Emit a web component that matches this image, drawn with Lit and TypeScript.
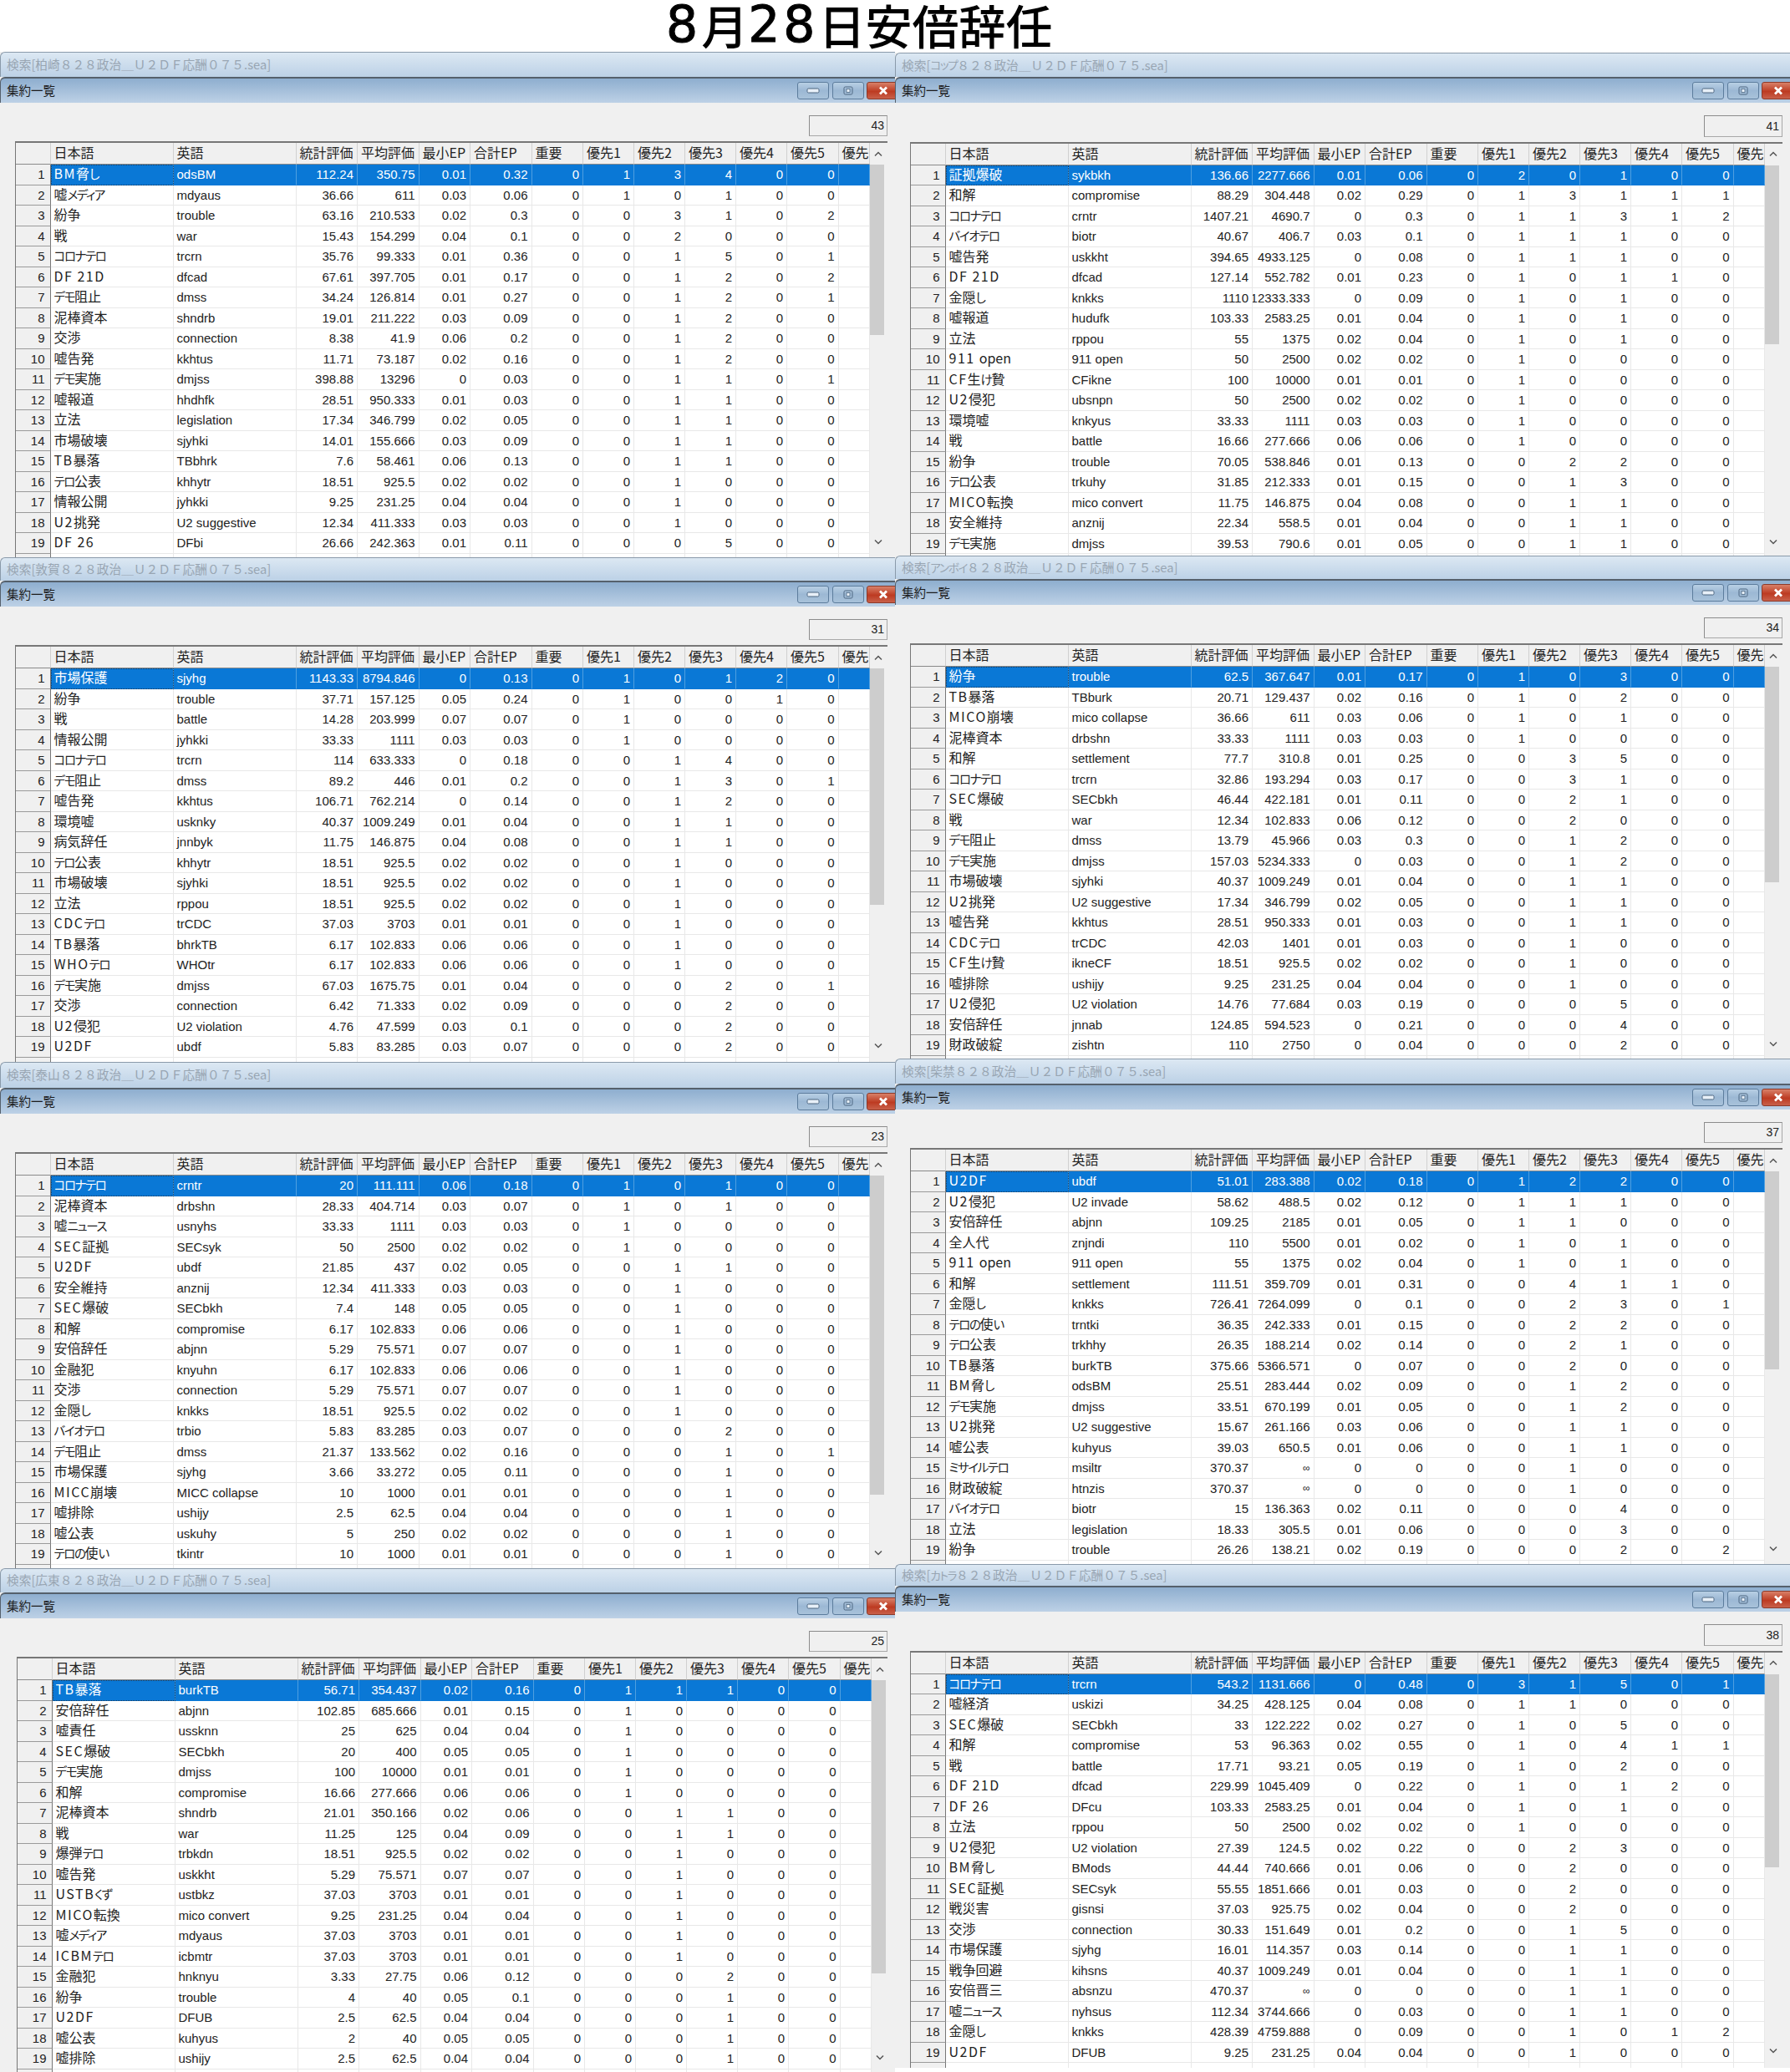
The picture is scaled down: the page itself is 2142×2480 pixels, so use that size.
import { LitElement, html, css } from 'lit';
import { customElement, property } from 'lit/decorators.js';

const HEADERS = ['', '日本語', '英語', '統計評価', '平均評価', '最小EP', '合計EP', '重要', '優先1', '優先2', '優先3', '優先4', '優先5', '優先'];

interface WindowData {
  name: string;
  count: number;
  height: number; // distance to next window
  bar: number; // outer bar height
  inset?: number; // left padding of the body
  rows: string;
}

const LEFT: WindowData[] = [
  {
    name: '柏崎', count: 43, height: 605, bar: 29.5, rows: `
BM脅し|odsBM|112.24|350.75|0.01|0.32|0|1|3|4|0|0
嘘メディア|mdyaus|36.66|611|0.03|0.06|0|1|0|1|0|0
紛争|trouble|63.16|210.533|0.02|0.3|0|0|3|1|0|2
戦|war|15.43|154.299|0.04|0.1|0|0|2|0|0|0
コロナテロ|trcrn|35.76|99.333|0.01|0.36|0|0|1|5|0|1
DF 21D|dfcad|67.61|397.705|0.01|0.17|0|0|1|2|0|2
デモ阻止|dmss|34.24|126.814|0.01|0.27|0|0|1|2|0|1
泥棒資本|shndrb|19.01|211.222|0.03|0.09|0|0|1|2|0|0
交渉|connection|8.38|41.9|0.06|0.2|0|0|1|2|0|0
嘘告発|kkhtus|11.71|73.187|0.02|0.16|0|0|1|2|0|0
デモ実施|dmjss|398.88|13296|0|0.03|0|0|1|1|0|1
嘘報道|hhdhfk|28.51|950.333|0.01|0.03|0|0|1|1|0|0
立法|legislation|17.34|346.799|0.02|0.05|0|0|1|1|0|0
市場破壊|sjyhki|14.01|155.666|0.03|0.09|0|0|1|1|0|0
TB暴落|TBbhrk|7.6|58.461|0.06|0.13|0|0|1|1|0|0
テロ公表|khhytr|18.51|925.5|0.02|0.02|0|0|1|0|0|0
情報公開|jyhkki|9.25|231.25|0.04|0.04|0|0|1|0|0|0
U2挑発|U2 suggestive|12.34|411.333|0.03|0.03|0|0|1|0|0|0
DF 26|DFbi|26.66|242.363|0.01|0.11|0|0|0|5|0|0`,
  },
  {
    name: '敦賀', count: 31, height: 604, bar: 27.5, rows: `
市場保護|sjyhg|1143.33|8794.846|0|0.13|0|1|0|1|2|0
紛争|trouble|37.71|157.125|0.05|0.24|0|1|0|0|1|0
戦|battle|14.28|203.999|0.07|0.07|0|1|0|0|0|0
情報公開|jyhkki|33.33|1111|0.03|0.03|0|1|0|0|0|0
コロナテロ|trcrn|114|633.333|0|0.18|0|0|1|4|0|0
デモ阻止|dmss|89.2|446|0.01|0.2|0|0|1|3|0|1
嘘告発|kkhtus|106.71|762.214|0|0.14|0|0|1|2|0|0
環境嘘|usknky|40.37|1009.249|0.01|0.04|0|0|1|1|0|0
病気辞任|jnnbyk|11.75|146.875|0.04|0.08|0|0|1|1|0|0
テロ公表|khhytr|18.51|925.5|0.02|0.02|0|0|1|0|0|0
市場破壊|sjyhki|18.51|925.5|0.02|0.02|0|0|1|0|0|0
立法|rppou|18.51|925.5|0.02|0.02|0|0|1|0|0|0
CDCテロ|trCDC|37.03|3703|0.01|0.01|0|0|1|0|0|0
TB暴落|bhrkTB|6.17|102.833|0.06|0.06|0|0|1|0|0|0
WHOテロ|WHOtr|6.17|102.833|0.06|0.06|0|0|1|0|0|0
デモ実施|dmjss|67.03|1675.75|0.01|0.04|0|0|0|2|0|1
交渉|connection|6.42|71.333|0.02|0.09|0|0|0|2|0|0
U2侵犯|U2 violation|4.76|47.599|0.03|0.1|0|0|0|2|0|0
U2DF|ubdf|5.83|83.285|0.03|0.07|0|0|0|2|0|0`,
  },
  {
    name: '泰山', count: 23, height: 606, bar: 30.5, rows: `
コロナテロ|crntr|20|111.111|0.06|0.18|0|1|0|1|0|0
泥棒資本|drbshn|28.33|404.714|0.03|0.07|0|1|0|1|0|0
嘘ニュース|usnyhs|33.33|1111|0.03|0.03|0|1|0|0|0|0
SEC証拠|SECsyk|50|2500|0.02|0.02|0|1|0|0|0|0
U2DF|ubdf|21.85|437|0.02|0.05|0|0|1|1|0|0
安全維持|anznij|12.34|411.333|0.03|0.03|0|0|1|0|0|0
SEC爆破|SECbkh|7.4|148|0.05|0.05|0|0|1|0|0|0
和解|compromise|6.17|102.833|0.06|0.06|0|0|1|0|0|0
安倍辞任|abjnn|5.29|75.571|0.07|0.07|0|0|1|0|0|0
金融犯|knyuhn|6.17|102.833|0.06|0.06|0|0|1|0|0|0
交渉|connection|5.29|75.571|0.07|0.07|0|0|1|0|0|0
金隠し|knkks|18.51|925.5|0.02|0.02|0|0|1|0|0|0
バイオテロ|trbio|5.83|83.285|0.03|0.07|0|0|0|2|0|0
デモ阻止|dmss|21.37|133.562|0.02|0.16|0|0|0|1|0|1
市場保護|sjyhg|3.66|33.272|0.05|0.11|0|0|0|1|0|0
MICC崩壊|MICC collapse|10|1000|0.01|0.01|0|0|0|1|0|0
嘘排除|ushijy|2.5|62.5|0.04|0.04|0|0|0|1|0|0
嘘公表|uskuhy|5|250|0.02|0.02|0|0|0|1|0|0
テロの使い|tkintr|10|1000|0.01|0.01|0|0|0|1|0|0`,
  },
  {
    name: '広東', count: 25, height: 603, bar: 28.5, inset: 20, rows: `
TB暴落|burkTB|56.71|354.437|0.02|0.16|0|1|1|1|0|0
安倍辞任|abjnn|102.85|685.666|0.01|0.15|0|1|0|0|0|0
嘘責任|ussknn|25|625|0.04|0.04|0|1|0|0|0|0
SEC爆破|SECbkh|20|400|0.05|0.05|0|1|0|0|0|0
デモ実施|dmjss|100|10000|0.01|0.01|0|1|0|0|0|0
和解|compromise|16.66|277.666|0.06|0.06|0|1|0|0|0|0
泥棒資本|shndrb|21.01|350.166|0.02|0.06|0|0|1|1|0|0
戦|war|11.25|125|0.04|0.09|0|0|1|1|0|0
爆弾テロ|trbkdn|18.51|925.5|0.02|0.02|0|0|1|0|0|0
嘘告発|uskkht|5.29|75.571|0.07|0.07|0|0|1|0|0|0
USTBくず|ustbkz|37.03|3703|0.01|0.01|0|0|1|0|0|0
MICO転換|mico convert|9.25|231.25|0.04|0.04|0|0|1|0|0|0
嘘メディア|mdyaus|37.03|3703|0.01|0.01|0|0|1|0|0|0
ICBMテロ|icbmtr|37.03|3703|0.01|0.01|0|0|1|0|0|0
金融犯|hnknyu|3.33|27.75|0.06|0.12|0|0|0|2|0|0
紛争|trouble|4|40|0.05|0.1|0|0|0|1|0|0
U2DF|DFUB|2.5|62.5|0.04|0.04|0|0|0|1|0|0
嘘公表|kuhyus|2|40|0.05|0.05|0|0|0|1|0|0
嘘排除|ushijy|2.5|62.5|0.04|0.04|0|0|0|1|0|0`,
  },
];

const RIGHT: WindowData[] = [
  {
    name: 'コップ', count: 41, height: 602, bar: 29, rows: `
証拠爆破|sykbkh|136.66|2277.666|0.01|0.06|0|2|0|1|0|0
和解|compromise|88.29|304.448|0.02|0.29|0|1|3|1|1|1
コロナテロ|crntr|1407.21|4690.7|0|0.3|0|1|1|3|1|2
バイオテロ|biotr|40.67|406.7|0.03|0.1|0|1|1|1|0|0
嘘告発|uskkht|394.65|4933.125|0|0.08|0|1|1|1|0|0
DF 21D|dfcad|127.14|552.782|0.01|0.23|0|1|0|1|1|0
金隠し|knkks|1110|12333.333|0|0.09|0|1|0|1|0|0
嘘報道|hudufk|103.33|2583.25|0.01|0.04|0|1|0|1|0|0
立法|rppou|55|1375|0.02|0.04|0|1|0|1|0|0
911 open|911 open|50|2500|0.02|0.02|0|1|0|0|0|0
CF生け贄|CFikne|100|10000|0.01|0.01|0|1|0|0|0|0
U2侵犯|ubsnpn|50|2500|0.02|0.02|0|1|0|0|0|0
環境嘘|knkyus|33.33|1111|0.03|0.03|0|1|0|0|0|0
戦|battle|16.66|277.666|0.06|0.06|0|1|0|0|0|0
紛争|trouble|70.05|538.846|0.01|0.13|0|0|2|2|0|0
テロ公表|trkuhy|31.85|212.333|0.01|0.15|0|0|1|3|0|0
MICO転換|mico convert|11.75|146.875|0.04|0.08|0|0|1|1|0|0
安全維持|anznij|22.34|558.5|0.01|0.04|0|0|1|1|0|0
デモ実施|dmjss|39.53|790.6|0.01|0.05|0|0|1|1|0|0`,
  },
  {
    name: 'アンボイ', count: 34, height: 602, bar: 27.5, rows: `
紛争|trouble|62.5|367.647|0.01|0.17|0|1|0|3|0|0
TB暴落|TBburk|20.71|129.437|0.02|0.16|0|1|0|2|0|0
MICO崩壊|mico collapse|36.66|611|0.03|0.06|0|1|0|1|0|0
泥棒資本|drbshn|33.33|1111|0.03|0.03|0|1|0|0|0|0
和解|settlement|77.7|310.8|0.01|0.25|0|0|3|5|0|0
コロナテロ|trcrn|32.86|193.294|0.03|0.17|0|0|3|1|0|0
SEC爆破|SECbkh|46.44|422.181|0.01|0.11|0|0|2|1|0|0
戦|war|12.34|102.833|0.06|0.12|0|0|2|0|0|0
デモ阻止|dmss|13.79|45.966|0.03|0.3|0|0|1|2|0|0
デモ実施|dmjss|157.03|5234.333|0|0.03|0|0|1|2|0|0
市場破壊|sjyhki|40.37|1009.249|0.01|0.04|0|0|1|1|0|0
U2挑発|U2 suggestive|17.34|346.799|0.02|0.05|0|0|1|1|0|0
嘘告発|kkhtus|28.51|950.333|0.01|0.03|0|0|1|1|0|0
CDCテロ|trCDC|42.03|1401|0.01|0.03|0|0|1|0|0|0
CF生け贄|ikneCF|18.51|925.5|0.02|0.02|0|0|1|0|0|0
嘘排除|ushijy|9.25|231.25|0.04|0.04|0|0|1|0|0|0
U2侵犯|U2 violation|14.76|77.684|0.03|0.19|0|0|0|5|0|0
安倍辞任|jnnab|124.85|594.523|0|0.21|0|0|0|4|0|0
財政破綻|zishtn|110|2750|0|0.04|0|0|0|2|0|0`,
  },
  {
    name: '柴禁', count: 37, height: 605, bar: 29.5, rows: `
U2DF|ubdf|51.01|283.388|0.02|0.18|0|1|2|2|0|0
U2侵犯|U2 invade|58.62|488.5|0.02|0.12|0|1|1|1|0|0
安倍辞任|abjnn|109.25|2185|0.01|0.05|0|1|1|0|0|0
全人代|znjndi|110|5500|0.01|0.02|0|1|0|1|0|0
911 open|911 open|55|1375|0.02|0.04|0|1|0|1|0|0
和解|settlement|111.51|359.709|0.01|0.31|0|0|4|1|1|0
金隠し|knkks|726.41|7264.099|0|0.1|0|0|2|3|0|1
テロの使い|trntki|36.35|242.333|0.01|0.15|0|0|2|2|0|0
テロ公表|trkhhy|26.35|188.214|0.02|0.14|0|0|2|1|0|0
TB暴落|burkTB|375.66|5366.571|0|0.07|0|0|2|0|0|0
BM脅し|odsBM|25.51|283.444|0.02|0.09|0|0|1|2|0|0
デモ実施|dmjss|33.51|670.199|0.01|0.05|0|0|1|2|0|0
U2挑発|U2 suggestive|15.67|261.166|0.03|0.06|0|0|1|1|0|0
嘘公表|kuhyus|39.03|650.5|0.01|0.06|0|0|1|1|0|0
ミサイルテロ|msiltr|370.37|∞|0|0|0|0|1|0|0|0
財政破綻|htnzis|370.37|∞|0|0|0|0|1|0|0|0
バイオテロ|biotr|15|136.363|0.02|0.11|0|0|0|4|0|0
立法|legislation|18.33|305.5|0.01|0.06|0|0|0|3|0|0
紛争|trouble|26.26|138.21|0.02|0.19|0|0|0|2|0|2`,
  },
  {
    name: 'カトラ', count: 38, height: 603, bar: 26, rows: `
コロナテロ|trcrn|543.2|1131.666|0|0.48|0|3|1|5|0|1
嘘経済|uskizi|34.25|428.125|0.04|0.08|0|1|1|0|0|0
SEC爆破|SECbkh|33|122.222|0.02|0.27|0|1|0|5|0|0
和解|compromise|53|96.363|0.02|0.55|0|1|0|4|1|1
戦|battle|17.71|93.21|0.05|0.19|0|1|0|2|0|0
DF 21D|dfcad|229.99|1045.409|0|0.22|0|1|0|1|2|0
DF 26|DFcu|103.33|2583.25|0.01|0.04|0|1|0|1|0|0
立法|rppou|50|2500|0.02|0.02|0|1|0|0|0|0
U2侵犯|U2 violation|27.39|124.5|0.02|0.22|0|0|2|3|0|0
BM脅し|BMods|44.44|740.666|0.01|0.06|0|0|2|0|0|0
SEC証拠|SECsyk|55.55|1851.666|0.01|0.03|0|0|2|0|0|0
戦災害|gisnsi|37.03|925.75|0.02|0.04|0|0|2|0|0|0
交渉|connection|30.33|151.649|0.01|0.2|0|0|1|5|0|0
市場保護|sjyhg|16.01|114.357|0.03|0.14|0|0|1|1|0|0
戦争回避|kihsns|40.37|1009.249|0.01|0.04|0|0|1|1|0|0
安倍晋三|absnzu|470.37|∞|0|0|0|0|1|1|0|0
嘘ニュース|nyhsus|112.34|3744.666|0|0.03|0|0|1|1|0|0
金隠し|knkks|428.39|4759.888|0|0.09|0|0|1|0|1|2
U2DF|DFUB|9.25|231.25|0.04|0.04|0|0|1|0|0|0`,
  },
];

// capitals and digits run wider than the kanji font gives them, kana narrower
const jpLabel = (text: string) =>
  text.split(/([A-Z0-9 ]+|[\u3040-\u30ff]+)/).map((part) => {
    if (/^[A-Z0-9 ]+$/.test(part)) return html`<span class="latin">${part}</span>`;
    if (/^[\u3040-\u30ff]+$/.test(part)) return html`<span class="kana">${part}</span>`;
    return part;
  });

@customElement('summary-window')
export class SummaryWindow extends LitElement {
  @property({ type: Object }) data!: WindowData;

  static styles = css`
    :host {
      display: block;
    }
    .window {
      overflow: hidden;
      background: #f0f0f0;
      color: #222;
      font-family: "Liberation Sans", "Noto Sans CJK JP", sans-serif;
      font-size: 15px;
      line-height: 1;
    }
    .outer-bar {
      box-sizing: border-box;
      display: flex;
      align-items: center;
      padding-left: 7px;
      border-top: 1px solid #8a9aaa;
      border-left: 1px solid #8a9aaa;
      border-top-left-radius: 6px;
      background: linear-gradient(#dce8f3, #bcd1e6);
      color: #98a5b2;
      font-family: "Noto Sans CJK JP", sans-serif;
      font-size: 14.7px;
      white-space: pre;
    }
    .outer-bar .kana {
      font-size: 13.5px;
      letter-spacing: -1.3px;
    }
    .title {
      box-sizing: border-box;
      height: 31px;
      display: flex;
      align-items: center;
      padding-left: 7px;
      border-top: 2px solid #55606c;
      border-left: 1px solid #55606c;
      border-top-left-radius: 6px;
      background: linear-gradient(#8eaecf, #bdd1e6);
      font-family: "Noto Sans CJK JP", sans-serif;
      font-size: 14.5px;
      color: #1c1c1c;
    }
    .buttons {
      margin-left: auto;
      display: flex;
      gap: 3.5px;
      margin-right: -6px;
    }
    .btn {
      box-sizing: border-box;
      width: 38px;
      height: 21px;
      display: flex;
      align-items: center;
      justify-content: center;
      border: 1px solid #5c7c9c;
      border-radius: 3px;
      background: linear-gradient(#b8cfe4, #9cb8d4 50%, #a8c2da);
    }
    .btn.close {
      width: 40px;
      border-color: #8c3a2a;
      background: linear-gradient(#d88068, #bd3b22 55%, #c8604a);
    }
    .body {
      box-sizing: border-box;
      padding-top: 15px;
      padding-right: 9px;
    }
    .count {
      box-sizing: border-box;
      width: 94px;
      height: 25.5px;
      margin-left: auto;
      margin-bottom: 6px;
      padding-right: 3px;
      display: flex;
      align-items: center;
      justify-content: flex-end;
      border: 1px solid #a8a8a8;
      border-top-color: #8c8c8c;
      border-left-color: #8c8c8c;
      font-size: 14px;
    }
    .table {
      display: flex;
      border-top: 2px solid #777;
      border-left: 1px solid #777;
    }
    .grid {
      width: 1021.5px;
      flex: none;
      background: #fff;
    }
    .row {
      display: grid;
      grid-template-columns: 41.5px 147px 147px 73.5px 73.5px 61.5px 73.5px 61.5px 61px 61px 61px 61px 61.5px 37px;
      height: 24.5px;
    }
    .row.head {
      height: 26px;
      background: #f0f0f0;
      font-family: "Noto Sans CJK JP", sans-serif;
      font-size: 16px;
    }
    .head .cell {
      box-sizing: border-box;
      display: flex;
      align-items: center;
      padding-left: 4px;
      padding-bottom: 3px;
      border-right: 1px solid #d0d0d0;
      border-bottom: 1px solid #8a8a8a;
      white-space: nowrap;
      overflow: hidden;
    }
    .cell {
      box-sizing: border-box;
      display: flex;
      align-items: center;
      border-right: 1px solid #e8e8e8;
      border-bottom: 1px solid #e8e8e8;
      white-space: pre;
      overflow: hidden;
    }
    .num {
      justify-content: flex-end;
      padding-right: 4px;
    }
    .num.inf {
      font-size: 12px;
    }
    .rowhead {
      justify-content: flex-end;
      padding-right: 6px;
      background: #f0f0f0;
      border-right: 1px solid #777;
      border-bottom: 1px solid #9a9a9a;
    }
    .jp {
      padding-left: 4px;
      padding-bottom: 3px;
      font-family: "Noto Sans CJK JP", sans-serif;
      font-size: 16px;
    }
    .latin {
      letter-spacing: 1.5px;
    }
    .kana {
      font-size: 14.5px;
      letter-spacing: -1.4px;
      font-feature-settings: "palt";
    }
    .en {
      padding-left: 4px;
    }
    .selected .cell:not(.rowhead) {
      background: #0a78d6;
      color: #fff;
      border-right-color: #4f9fe0;
      border-bottom-color: #0a78d6;
    }
    .selected .jp {
      outline: 1px dotted #163a5c;
      outline-offset: -1px;
    }
    .scroll {
      width: 21.5px;
      flex: none;
      display: flex;
      flex-direction: column;
      background: #f0f0f0;
    }
    .arrow {
      height: 26px;
      flex: none;
      display: flex;
      align-items: center;
      justify-content: center;
    }
    .thumb {
      flex: none;
      width: 17px;
      background: #cdcdcd;
    }
    .track {
      flex: 1;
    }
    .arrow.down {
      height: 18px;
    }
    .tail {
      height: 30px;
      flex: none;
    }
  `;

  render() {
    const d = this.data;
    const rows = d.rows.trim().split('\n').map((l) => l.split('|'));
    const inset = d.inset ?? 18;
    return html`
      <div class="window" style="height:${d.height}px">
        <div class="outer-bar" style="height:${d.bar}px">検索[${jpLabel(d.name)}８２８政治＿Ｕ２ＤＦ応酬０７５.sea]</div>
        <div class="title">
          集約一覧
          <div class="buttons">
            <div class="btn">
              <svg width="16" height="7" viewBox="0 0 16 7"><rect x="1" y="1" width="14" height="5" rx="1.5" fill="#e8f0f8" stroke="#4d6680"/></svg>
            </div>
            <div class="btn">
              <svg width="12" height="11" viewBox="0 0 12 11"><rect x="1" y="1" width="10" height="9" rx="1.5" fill="none" stroke="#4d6680"/><rect x="4" y="3.5" width="4" height="4" fill="#e8f0f8" stroke="#4d6680" stroke-width="0.8"/></svg>
            </div>
            <div class="btn close">
              <svg width="12" height="11" viewBox="0 0 12 11"><path d="M2 1.5 L10 9.5 M10 1.5 L2 9.5" stroke="#fff" stroke-width="2.8" fill="none"/></svg>
            </div>
          </div>
        </div>
        <div class="body" style="padding-left:${inset}px">
          <div class="count">${d.count}</div>
          <div class="table">
            <div class="grid">
              <div class="row head">${HEADERS.map((h) => html`<div class="cell">${h}</div>`)}</div>
              ${rows.map((r, i) => html`
                <div class="row ${i === 0 ? 'selected' : ''}">
                  <div class="cell rowhead">${i + 1}</div>
                  <div class="cell jp"><span>${jpLabel(r[0])}</span></div>
                  <div class="cell en">${r[1]}</div>
                  ${r.slice(2).map((v) => html`<div class="cell num ${v === '∞' ? 'inf' : ''}">${v}</div>`)}
                  <div class="cell"></div>
                </div>
              `)}
              <div class="row">
                <div class="cell rowhead"></div>
                ${HEADERS.slice(1).map(() => html`<div class="cell"></div>`)}
              </div>
            </div>
            <div class="scroll">
              <div class="arrow">
                <svg width="10" height="7" viewBox="0 0 10 7"><path d="M1 5.5 L5 1.5 L9 5.5" fill="none" stroke="#555" stroke-width="1.5"/></svg>
              </div>
              <div class="thumb" style="height:${Math.round(8780 / d.count)}px"></div>
              <div class="track"></div>
              <div class="arrow down">
                <svg width="10" height="7" viewBox="0 0 10 7"><path d="M1 1.5 L5 5.5 L9 1.5" fill="none" stroke="#555" stroke-width="1.5"/></svg>
              </div>
              <div class="tail"></div>
            </div>
          </div>
        </div>
      </div>
    `;
  }
}

@customElement('app-root')
export class AppRoot extends LitElement {
  static styles = css`
    :host {
      display: block;
      width: 2142px;
      height: 2480px;
      overflow: hidden;
      background: #fff;
    }
    .heading {
      box-sizing: border-box;
      height: 62px;
      display: flex;
      align-items: center;
      padding-left: 797px;
      padding-bottom: 4px;
      font-family: "Noto Sans CJK JP", sans-serif;
      font-size: 56px;
      line-height: 1;
      font-weight: 500;
      color: #000;
      white-space: nowrap;
    }
    .digit {
      font-family: "DejaVu Sans", sans-serif;
      font-size: 60px;
      font-weight: 400;
      letter-spacing: 4px;
      -webkit-text-stroke: 1px #000;
    }
    .columns {
      display: grid;
      grid-template-columns: 1071px 1071px;
    }
    .column.right {
      margin-top: 1px;
    }
  `;

  render() {
    return html`
      <div class="heading"><span class="digit">8</span>月<span class="digit">28</span>日安倍辞任</div>
      <div class="columns">
        <div class="column">${LEFT.map((w) => html`<summary-window .data=${w}></summary-window>`)}</div>
        <div class="column right">${RIGHT.map((w) => html`<summary-window .data=${w}></summary-window>`)}</div>
      </div>
    `;
  }
}
